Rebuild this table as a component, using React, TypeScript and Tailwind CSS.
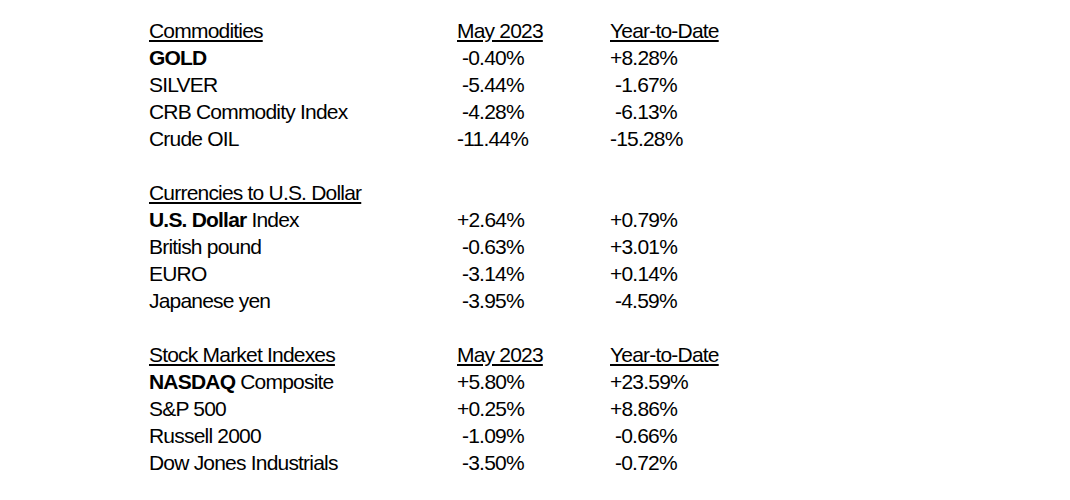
import React from "react";

type Row = { label: React.ReactNode; may: string; ytd: string };
type Section = { title: string; may?: string; ytd?: string; rows: Row[] };

const sections: Section[] = [
  {
    title: "Commodities",
    may: "May 2023",
    ytd: "Year-to-Date",
    rows: [
      { label: <b>GOLD</b>, may: " -0.40%", ytd: "+8.28%" },
      { label: "SILVER", may: " -5.44%", ytd: " -1.67%" },
      { label: "CRB Commodity Index", may: " -4.28%", ytd: " -6.13%" },
      { label: "Crude OIL", may: "-11.44%", ytd: "-15.28%" },
    ],
  },
  {
    title: "Currencies to U.S. Dollar",
    rows: [
      { label: <><b>U.S. Dollar</b> Index</>, may: "+2.64%", ytd: "+0.79%" },
      { label: "British pound", may: " -0.63%", ytd: "+3.01%" },
      { label: "EURO", may: " -3.14%", ytd: "+0.14%" },
      { label: "Japanese yen", may: " -3.95%", ytd: " -4.59%" },
    ],
  },
  {
    title: "Stock Market Indexes",
    may: "May 2023",
    ytd: "Year-to-Date",
    rows: [
      { label: <><b>NASDAQ</b> Composite</>, may: "+5.80%", ytd: "+23.59%" },
      { label: "S&P 500", may: "+0.25%", ytd: "+8.86%" },
      { label: "Russell 2000", may: " -1.09%", ytd: " -0.66%" },
      { label: "Dow Jones Industrials", may: " -3.50%", ytd: " -0.72%" },
    ],
  },
];

export default function App() {
  return (
    <div
      className="min-h-[500px] w-[1070px] bg-white pl-[149px] pt-[17px] text-[21px] leading-[27px] tracking-[-0.8px] text-black"
      style={{ fontFamily: '"Liberation Sans Narrow", "Arial Narrow", "Liberation Sans", Arial, sans-serif' }}
    >
      {sections.map((s, i) => (
        <div key={i} className={i > 0 ? "mt-[27px]" : ""}>
          <div className="grid grid-cols-[308px_153px_auto] whitespace-pre">
            <span className="underline">{s.title}</span>
            <span className="underline">{s.may ?? ""}</span>
            <span className="underline">{s.ytd ?? ""}</span>
            {s.rows.map((r, j) => (
              <React.Fragment key={j}>
                <span>{r.label}</span>
                <span>{r.may}</span>
                <span>{r.ytd}</span>
              </React.Fragment>
            ))}
          </div>
        </div>
      ))}
    </div>
  );
}
